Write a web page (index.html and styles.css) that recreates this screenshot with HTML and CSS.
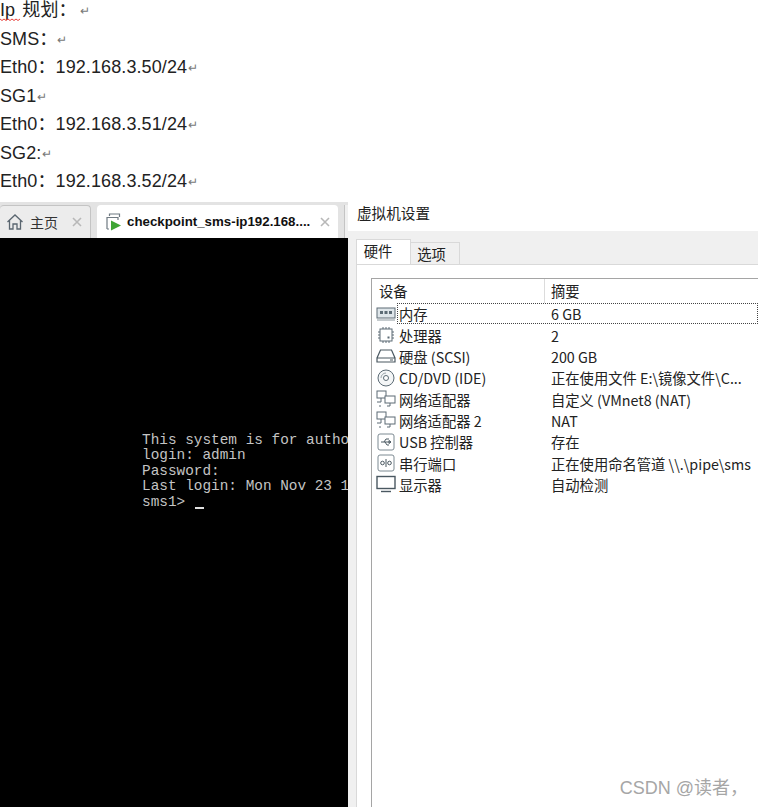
FILE: index.html
```html
<!DOCTYPE html>
<html lang="zh">
<head>
<meta charset="utf-8">
<title>IP 规划</title>
<link rel="stylesheet" href="styles.css">
</head>
<body>
<div class="doc">
  <p class="line"><span class="squiggle">Ip <svg class="wave" viewBox="0 0 22 3" width="22" height="3"><path d="M0 1l2 1.500 2-1.500 2 1.500 2-1.500 2 1.500 2-1.500 2 1.500 2-1.500 2 1.500 2-1.500" fill="none" stroke="#e8403c" stroke-width="1"/></svg></span>规划：<span class="mark wide">↵</span></p>
  <p class="line">SMS：<span class="mark narrow">↵</span></p>
  <p class="line">Eth0：192.168.3.50/24<span class="mark">↵</span></p>
  <p class="line">SG1<span class="mark">↵</span></p>
  <p class="line">Eth0：192.168.3.51/24<span class="mark">↵</span></p>
  <p class="line">SG2:<span class="mark">↵</span></p>
  <p class="line">Eth0：192.168.3.52/24<span class="mark">↵</span></p>
</div>
<div class="shots">
  <section class="vm">
    <div class="tabs">
      <div class="tab home">
        <svg class="ico-home" viewBox="0 0 18 18" width="18" height="18"><path d="M1.500 9 9 2l7.500 7M3.500 7.500V16H7v-5h4v5h3.500V7.500" fill="none" stroke="#5a6670" stroke-width="1.300"/></svg>
        <span class="tab-label">主页</span>
        <svg class="close" viewBox="0 0 10 10" width="10" height="10"><path d="M1 1l8 8M9 1l-8 8" stroke="#b8b8b8" stroke-width="1.600"/></svg>
      </div>
      <div class="tab active">
        <svg class="ico-vm" viewBox="0 0 18 18" width="18" height="18"><path d="M5.500 3V1h10v3M3 16V4.500h11V7M3 16h2" fill="none" stroke="#6f7a82" stroke-width="1.200"/><path d="M7 7.500 17 12.500 7 17.500z" fill="#3fa535"/></svg>
        <span class="tab-title">checkpoint_sms-ip192.168....</span>
        <svg class="close" viewBox="0 0 10 10" width="10" height="10"><path d="M1 1l8 8M9 1l-8 8" stroke="#b8b8b8" stroke-width="1.600"/></svg>
      </div>
      <div class="tab-stub"></div>
    </div>
    <div class="console">
<pre class="term">This system is for autho
login: admin
Password:
Last login: Mon Nov 23 1
sms1&gt; <span class="cursor"></span></pre>
    </div>
  </section>
  <section class="settings">
    <h1 class="dlg-title">虚拟机设置</h1>
    <div class="dlg-body">
      <div class="dlg-tabs">
        <div class="dlg-tab on">硬件</div>
        <div class="dlg-tab">选项</div>
      </div>
      <div class="dlg-page">
        <div class="list">
          <div class="list-head"><span class="col-a">设备</span><span class="col-b">摘要</span></div>
          <div class="row focus">
            <svg class="dev" viewBox="0 0 20 16"><rect x="1" y="2" width="18" height="10" fill="#dfe6ea" stroke="#5c6b75"/><path d="M4 5h3v3H4zM8.500 5h3v3h-3zM13 5h3v3h-3z" fill="#5c6b75"/><path d="M1 14h18" stroke="#8b979e"/></svg>
            <span class="name">内存</span><span class="val">6 GB</span>
          </div>
          <div class="row">
            <svg class="dev" viewBox="0 0 20 18"><rect x="4" y="3" width="12" height="12" fill="#fff" stroke="#5c6b75"/><path d="M7 1v2M10 1v2M13 1v2M7 15v2M10 15v2M13 15v2M2 6h2M2 9h2M2 12h2M16 6h2M16 9h2M16 12h2" stroke="#5c6b75"/><rect x="11.500" y="10.500" width="2" height="2" fill="#5c6b75"/></svg>
            <span class="name">处理器</span><span class="val">2</span>
          </div>
          <div class="row">
            <svg class="dev" viewBox="0 0 20 16"><path d="M4.500 2h11L19 10v4H1v-4zM1 10h18" fill="#fff" stroke="#4a5861" stroke-width="1.200"/><path d="M14 12h3" stroke="#4a5861"/></svg>
            <span class="name">硬盘 (SCSI)</span><span class="val">200 GB</span>
          </div>
          <div class="row">
            <svg class="dev" viewBox="0 0 20 18"><circle cx="10" cy="9" r="8" fill="#f4f6f7" stroke="#5c6b75"/><circle cx="10" cy="9" r="2.500" fill="#fff" stroke="#5c6b75"/><path d="M5 9a5 5 0 0 1 5-5" fill="none" stroke="#9aa5ab"/></svg>
            <span class="name">CD/DVD (IDE)</span><span class="val">正在使用文件 E:\镜像文件\C...</span>
          </div>
          <div class="row">
            <svg class="dev" viewBox="0 0 20 18"><rect x="1" y="1" width="9" height="7" fill="#fff" stroke="#5c6b75"/><rect x="9" y="6" width="10" height="7" fill="#fff" stroke="#5c6b75"/><path d="M14 13v3h-3M5 8v4H1M3 16h2" fill="none" stroke="#5c6b75"/></svg>
            <span class="name">网络适配器</span><span class="val">自定义 (VMnet8 (NAT)</span>
          </div>
          <div class="row">
            <svg class="dev" viewBox="0 0 20 18"><rect x="1" y="1" width="9" height="7" fill="#fff" stroke="#5c6b75"/><rect x="9" y="6" width="10" height="7" fill="#fff" stroke="#5c6b75"/><path d="M14 13v3h-3M5 8v4H1M3 16h2" fill="none" stroke="#5c6b75"/></svg>
            <span class="name">网络适配器 2</span><span class="val">NAT</span>
          </div>
          <div class="row">
            <svg class="dev" viewBox="0 0 20 18"><rect x="2" y="1" width="16" height="16" rx="2" fill="#fff" stroke="#7d8a92"/><path d="M5 9h10M15 9l-2-1.500v3zM8 9l2-3h3M9 9l2 3h2" fill="none" stroke="#4a5861"/></svg>
            <span class="name">USB 控制器</span><span class="val">存在</span>
          </div>
          <div class="row">
            <svg class="dev" viewBox="0 0 20 18"><rect x="2" y="1" width="16" height="16" rx="2" fill="#fff" stroke="#7d8a92"/><circle cx="6.500" cy="9" r="1.800" fill="none" stroke="#4a5861"/><circle cx="13.500" cy="9" r="1.800" fill="none" stroke="#4a5861"/><path d="M10 5v8" stroke="#4a5861"/></svg>
            <span class="name">串行端口</span><span class="val">正在使用命名管道 \\.\pipe\sms</span>
          </div>
          <div class="row">
            <svg class="dev" viewBox="0 0 20 18"><rect x="1" y="1.500" width="18" height="12" fill="#fff" stroke="#4a5861" stroke-width="1.400"/><path d="M5 16.500h10" stroke="#4a5861" stroke-width="1.400"/></svg>
            <span class="name">显示器</span><span class="val">自动检测</span>
          </div>
        </div>
      </div>
    </div>
    <div class="watermark">CSDN @读者，</div>
  </section>
</div>
</body>
</html>
```
FILE: styles.css
```css
html, body {
  margin: 0;
  padding: 0;
  background: #fff;
}
body {
  width: 758px;
  height: 807px;
  overflow: hidden;
  font-family: "Noto Sans CJK SC", "Liberation Sans", sans-serif;
}
.doc {
  height: 202px;
  box-sizing: border-box;
}
.line {
  margin: 0;
  height: 28.500px;
  line-height: 20px;
  font-family: "Liberation Sans", "Noto Sans CJK SC", sans-serif;
  font-size: 18px;
  letter-spacing: 0.1px;
  color: #222;
}
.squiggle {
  position: relative;
  margin-right: 2px;
}
.wave {
  position: absolute;
  left: 0;
  top: 18px;
}
.mark {
  font-size: 12px;
  color: #777;
  margin-left: 1px;
  vertical-align: 1px;
}
.mark.wide {
  margin-left: 3px;
}
.mark.narrow {
  margin-left: 0;
}
.shots {
  display: flex;
  height: 605px;
}
.vm {
  width: 348px;
  flex: none;
  display: flex;
  flex-direction: column;
}
.tabs {
  height: 36px;
  flex: none;
  box-sizing: border-box;
  padding-top: 3px;
  background: #e3e3e3;
  display: flex;
  gap: 6px;
  font-size: 14px;
}
.tab {
  height: 33px;
  box-sizing: border-box;
  display: flex;
  align-items: center;
  border-radius: 4px 4px 0 0;
}
.tab-stub {
  width: 4px;
  background: #f0f0f0;
  border-left: 1px solid #c4c4c4;
  box-sizing: border-box;
}
.home {
  width: 91px;
  padding-left: 6px;
  background: #ececec;
  border: 1px solid #c4c4c4;
  border-bottom: 0;
  border-left: 0;
  color: #333;
}
.tab-label {
  margin-left: 6px;
}
.active {
  width: 241px;
  padding-left: 7px;
  background: #fff;
}
.tab-title {
  margin-left: 5px;
  font-family: "Liberation Sans", sans-serif;
  font-weight: 700;
  font-size: 13.300px;
  color: #111;
  white-space: nowrap;
}
.close {
  margin-left: auto;
  margin-right: 8px;
  flex: none;
}
.console {
  flex: 1;
  background: #000;
  box-sizing: border-box;
  padding: 194.500px 0 0 142px;
  overflow: hidden;
}
.term {
  margin: 0;
  font-family: "Liberation Mono", "DejaVu Sans Mono", monospace;
  font-size: 14.400px;
  line-height: 15.500px;
  color: #c4c4c4;
  width: 206px;
  overflow: hidden;
}
.cursor {
  display: inline-block;
  width: 9px;
  height: 2px;
  background: #e0e0e0;
  margin-left: 1px;
  vertical-align: -3px;
}
.settings {
  flex: 1;
  min-width: 0;
  position: relative;
  background: #fff;
  display: flex;
  flex-direction: column;
}
.dlg-title {
  margin: 0;
  height: 29px;
  box-sizing: border-box;
  padding: 2px 0 0 9px;
  font-size: 14.600px;
  line-height: 18px;
  font-weight: 400;
  color: #222;
}
.dlg-body {
  flex: 1;
  background: #f0f0f0;
  box-sizing: border-box;
  padding: 9px 0 0 8px;
  display: flex;
  flex-direction: column;
}
.dlg-tabs {
  display: flex;
  align-items: flex-end;
  height: 24px;
  flex: none;
  font-size: 14.300px;
  color: #222;
  position: relative;
  z-index: 1;
}
.dlg-tab {
  width: 49px;
  height: 22px;
  box-sizing: border-box;
  padding-right: 7px;
  text-align: center;
  line-height: 22px;
  background: #f0f0f0;
  border: 1px solid #d9d9d9;
  border-bottom: 0;
  border-left: 0;
}
.dlg-tab.on {
  width: 55px;
  height: 25px;
  background: #fff;
  border-left: 1px solid #d9d9d9;
  padding-right: 11px;
  line-height: 22px;
}
.dlg-page {
  flex: 1;
  background: #fff;
  border-top: 1px solid #d9d9d9;
  border-left: 1px solid #d9d9d9;
  box-sizing: border-box;
  padding: 13px 0 0 14px;
}
.list {
  height: 100%;
  box-sizing: border-box;
  border: 1px solid #a5a5a5;
  border-right: 0;
  border-bottom: 0;
  font-size: 14.300px;
  color: #222;
}
.list-head {
  display: flex;
  height: 24px;
  align-items: center;
  line-height: 24px;
}
.col-a {
  width: 173px;
  box-sizing: border-box;
  padding-left: 7px;
  border-right: 1px solid #dcdcdc;
}
.col-b {
  padding-left: 6px;
}
.row {
  display: flex;
  align-items: center;
  height: 21.350px;
  line-height: 21px;
  position: relative;
  white-space: nowrap;
}
.row.focus::after {
  content: "";
  position: absolute;
  left: 25px;
  right: 0;
  top: 0;
  bottom: 0;
  border: 1px dotted #444;
}
.dev {
  width: 20px;
  height: 18px;
  flex: none;
  margin-left: 4px;
}
.name {
  width: 153px;
  flex: none;
  margin-left: 3px;
}
.val {
  margin-left: -1px;
}
.watermark {
  position: absolute;
  right: 10px;
  bottom: 7px;
  font-family: "Liberation Sans", "Noto Sans CJK SC", sans-serif;
  font-size: 18px;
  line-height: 24px;
  color: #a6a6a6;
  white-space: nowrap;
}
```
